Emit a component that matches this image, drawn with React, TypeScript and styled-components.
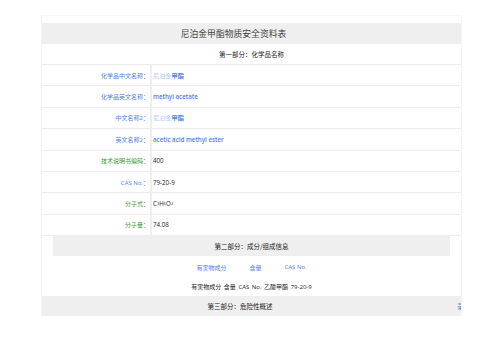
import styled, { createGlobalStyle } from "styled-components";

const GlobalStyle = createGlobalStyle`
	html, body {
		margin: 0;
		padding: 0;
		background: #fff;
	}
	body {
		font-family: "Open Sans", "Noto Sans CJK SC", sans-serif;
	}
`;

const colors = {
	blue: "#4f80ea",
	blueLight: "#8aa6ee",
	green: "#389a33",
	text: "#222",
	line: "#eeeeee",
	bar: "#efefef",
};

const Page = styled.div`
	padding-top: 16px;
	padding-left: 41px;
`;

const Sheet = styled.div`
	width: 421px;
	padding-top: 7px;
	border-top: 1px solid #f8f8f8;
	border-left: 1px solid #f4f4f4;
	border-right: 1px solid #f4f4f4;
	box-sizing: border-box;
	position: relative;
	margin-top: -1px;
`;

const TitleBar = styled.div`
	height: 21px;
	background: ${colors.bar};
	display: flex;
	align-items: center;
	justify-content: center;
	padding-right: 36px;
	font-family: "Noto Sans CJK SC", serif;
	font-size: 8.8px;
	color: #444;
`;

const PartHeader = styled.div`
	height: 21px;
	display: flex;
	align-items: center;
	justify-content: center;
	border-bottom: 1px solid ${colors.line};
	box-sizing: border-box;
	font-family: "Noto Sans CJK SC", sans-serif;
	font-size: 6.5px;
	color: #222;
`;

const Row = styled.div`
	height: 21.4px;
	display: grid;
	grid-template-columns: 110px 1fr;
	border-bottom: 1px solid ${colors.line};
	box-sizing: border-box;
`;

const Label = styled.div<{ $tone: "blue" | "green" }>`
	display: flex;
	align-items: center;
	justify-content: flex-end;
	padding-right: 1px;
	border-right: 2px solid ${colors.line};
	font-family: "Open Sans", "Noto Sans CJK SC", sans-serif;
	font-size: 6px;
	color: ${(p) => (p.$tone === "blue" ? colors.blue : colors.green)};
`;

const Value = styled.div<{ $tone?: "blue" | "dark" }>`
	display: flex;
	align-items: center;
	padding-left: 1px;
	font-family: "Open Sans", "Noto Sans CJK SC", sans-serif;
	font-size: 6.2px;
	font-weight: ${(p) => (p.$tone === "blue" ? 600 : 400)};
	color: ${(p) => (p.$tone === "blue" ? colors.blue : colors.text)};

	sub {
		font-size: 4px;
		vertical-align: -1px;
	}
`;

const Light = styled.span`
	color: ${colors.blueLight};
	font-weight: 300;
`;

const Strong = styled.span`
	color: ${colors.blue};
	font-weight: 700;
`;

const PartBar = styled.div<{ $inset?: boolean }>`
	height: 20px;
	margin: ${(p) => (p.$inset ? "0 11px 0 11px" : "0")};
	background: ${colors.bar};
	display: flex;
	align-items: center;
	justify-content: center;
	position: relative;
	overflow: hidden;
	font-family: "Noto Sans CJK SC", sans-serif;
	font-size: 6.5px;
	color: #222;
`;

const PartBarText = styled.span<{ $shift?: number }>`
	margin-right: ${(p) => p.$shift ?? 0}px;
`;

const CornerLink = styled.span`
	position: absolute;
	right: -3px;
	top: 5px;
	color: ${colors.blue};
	font-size: 7px;
`;

const Composition = styled.div`
	padding: 6px 0 5px;
	display: flex;
	flex-direction: column;
	align-items: center;
	gap: 9px;
	font-family: "Open Sans", "Noto Sans CJK SC", sans-serif;
	font-size: 6px;
`;

const HeadLine = styled.div`
	display: flex;
	gap: 23px;
	color: ${colors.blue};
	height: 10px;
	align-items: center;
`;

const DataLine = styled.div`
	color: ${colors.text};
	word-spacing: 1px;
	height: 10px;
	display: flex;
	align-items: center;
`;

const rows: { label: string; tone: "blue" | "green"; value: React.ReactNode; valueTone?: "blue" | "dark" }[] = [
	{ label: "化学品中文名称：", tone: "blue", value: <><Light>尼泊金</Light><Strong>甲酯</Strong></> },
	{ label: "化学品英文名称：", tone: "blue", value: "methyl acetate", valueTone: "blue" },
	{ label: "中文名称2：", tone: "blue", value: <><Light>尼泊金</Light><Strong>甲酯</Strong></> },
	{ label: "英文名称2：", tone: "blue", value: "acetic acid methyl ester", valueTone: "blue" },
	{ label: "技术说明书编码：", tone: "green", value: "400" },
	{ label: "CAS No.：", tone: "blue", value: "79-20-9" },
	{ label: "分子式：", tone: "green", value: <>C<sub>3</sub>H<sub>6</sub>O<sub>2</sub></> },
	{ label: "分子量：", tone: "green", value: "74.08" },
];

const App = () => {
	return (
		<Page>
			<GlobalStyle />
			<Sheet>
				<TitleBar>尼泊金甲酯物质安全资料表</TitleBar>
				<PartHeader>第一部分：化学品名称</PartHeader>
				{rows.map((r) => (
					<Row key={r.label}>
						<Label $tone={r.tone}>{r.label}</Label>
						<Value $tone={r.valueTone}>{r.value}</Value>
					</Row>
				))}
				<PartBar $inset>第二部分：成分/组成信息</PartBar>
				<Composition>
					<HeadLine>
						<span>有害物成分</span>
						<span>含量</span>
						<span>CAS No.</span>
					</HeadLine>
					<DataLine>有害物成分 含量 CAS No. 乙酸甲酯 79-20-9</DataLine>
				</Composition>
				<PartBar>
					<PartBarText $shift={23}>第三部分：危险性概述</PartBarText>
					<CornerLink>录</CornerLink>
				</PartBar>
			</Sheet>
		</Page>
	);
};

export default App;
